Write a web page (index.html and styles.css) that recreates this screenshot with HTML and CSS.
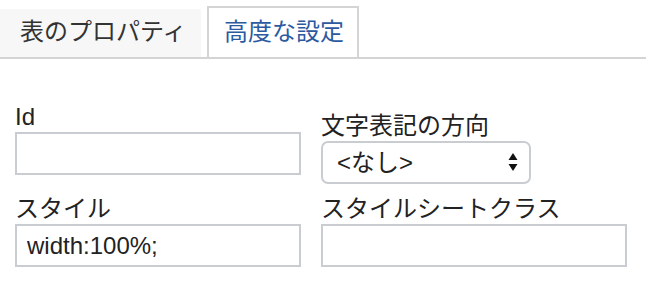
FILE: index.html
```html
<!DOCTYPE html>
<html lang="ja">
<head>
<meta charset="utf-8">
<title>高度な設定</title>
<link rel="stylesheet" href="styles.css">
</head>
<body>
<div class="dialog">
  <div class="tabbar">
    <div class="tab">表のプロパティ</div>
    <div class="tab tab-active">高度な設定</div>
  </div>
  <div class="form">
    <div class="field">
      <label class="label" for="f-id">Id</label>
      <input class="input input-left" id="f-id" type="text" value="">
    </div>
    <div class="field field-offset">
      <label class="label" for="f-dir">文字表記の方向</label>
      <div class="select-wrap">
        <select class="select" id="f-dir">
          <option>&lt;なし&gt;</option>
        </select>
        <svg class="select-arrow" width="10" height="20" viewBox="0 0 10 20" aria-hidden="true">
          <polygon points="5,1 9.5,8 0.5,8" fill="#111"/>
          <polygon points="0.5,12 9.5,12 5,19" fill="#111"/>
        </svg>
      </div>
    </div>
    <div class="field">
      <label class="label" for="f-style">スタイル</label>
      <input class="input input-left" id="f-style" type="text" value="width:100%;">
    </div>
    <div class="field">
      <label class="label" for="f-class">スタイルシートクラス</label>
      <input class="input input-right" id="f-class" type="text" value="">
    </div>
  </div>
</div>
</body>
</html>
```

FILE: styles.css
```css
html, body {
  margin: 0;
  padding: 0;
  background: #ffffff;
}

body {
  font-family: "Liberation Sans", "Noto Sans CJK JP", sans-serif;
  font-size: 24px;
  color: #222222;
  width: 646px;
  height: 285px;
  overflow: hidden;
}

.tabbar {
  display: flex;
  align-items: flex-end;
  height: 57px;
  border-bottom: 2px solid #d4d4d4;
}

.tab {
  box-sizing: border-box;
  height: 48px;
  width: 201px;
  padding: 0 0 2px 20px;
  line-height: 46px;
  background: #f7f7f7;
  color: #333333;
  white-space: nowrap;
}

.tab-active {
  width: 152px;
  height: 51px;
  margin-left: 6px;
  padding: 0 0 2px 15px;
  line-height: 47px;
  background: #ffffff;
  color: #2c5aa0;
  border: 2px solid #d4d4d4;
  border-bottom: 0;
}

.form {
  display: grid;
  grid-template-columns: 286px 306px;
  column-gap: 20px;
  row-gap: 10px;
  padding: 0 0 0 15px;
  margin-top: 43px;
  align-items: start;
}

.field {
  display: flex;
  flex-direction: column;
  align-items: flex-start;
}

.field-offset {
  padding-top: 9px;
}

.label {
  display: block;
  line-height: 29px;
  margin-bottom: 1px;
  color: #222222;
  white-space: nowrap;
}

.input {
  box-sizing: border-box;
  height: 43px;
  margin: 0;
  padding: 0 10px;
  border: 2px solid #c9cdd2;
  border-radius: 0;
  background: #ffffff;
  font-family: "Liberation Sans", "Noto Sans CJK JP", sans-serif;
  font-size: 24px;
  color: #222222;
  outline: none;
}

.input-left {
  width: 286px;
}

.input-right {
  width: 306px;
}

.select-wrap {
  position: relative;
  width: 210px;
  height: 43px;
}

.select {
  -webkit-appearance: none;
  appearance: none;
  box-sizing: border-box;
  width: 210px;
  height: 43px;
  margin: 0;
  padding: 0 0 0 14px;
  border: 2px solid #c9cdd2;
  border-radius: 7px;
  background: #ffffff;
  font-family: "Liberation Sans", "Noto Sans CJK JP", sans-serif;
  font-size: 24px;
  color: #222222;
  outline: none;
}

.select-arrow {
  position: absolute;
  right: 13px;
  top: 11px;
  pointer-events: none;
}
```
